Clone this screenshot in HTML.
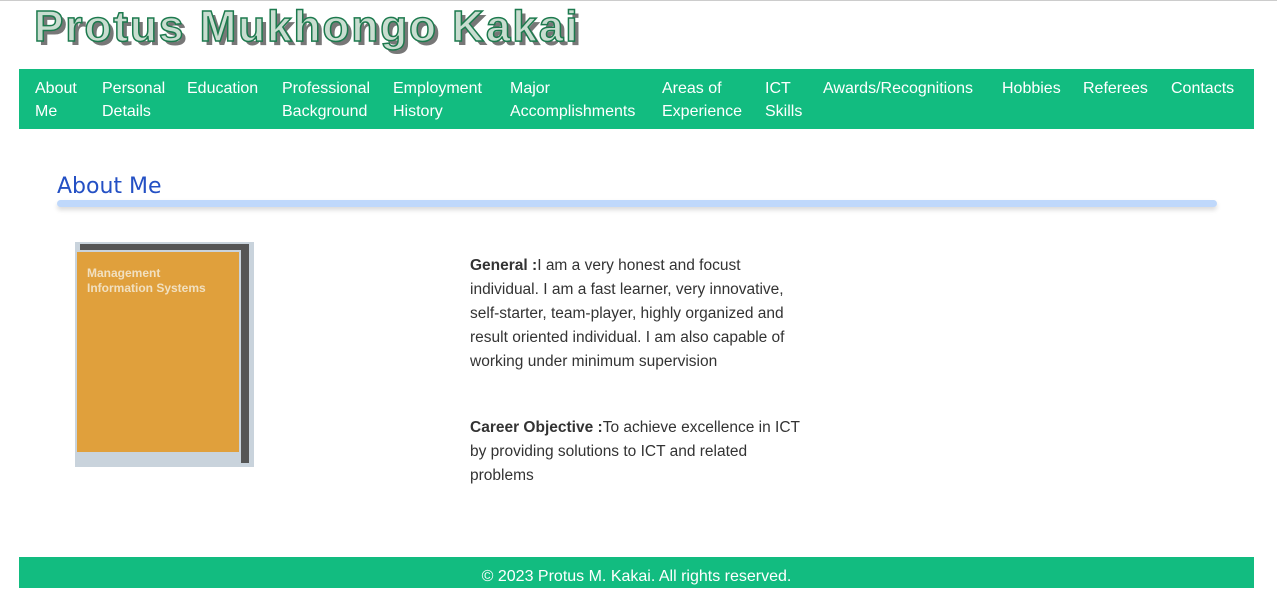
<!DOCTYPE html>
<html><head><style>
body{margin:0;width:1277px;height:588px;background:#fff;font-family:"Liberation Sans",sans-serif;position:relative;overflow:hidden;border-top:1px solid #ccc;box-sizing:border-box}
.title{position:absolute;left:34px;top:1px;font:900 44px "Liberation Sans",sans-serif;letter-spacing:2px;color:#c9ddd0;-webkit-text-stroke:1.5px #1d7a4e;text-shadow:4px 4px 0 #777;white-space:nowrap}
nav{position:absolute;left:19px;top:68px;width:1235px;height:60px;background:#12bc80}
nav span{position:absolute;top:8px;color:#fff;font-size:16px;line-height:23px}
h2{position:absolute;left:57px;top:173px;margin:0;font:400 22px "DejaVu Sans",sans-serif;color:#2450c4}
.bar{position:absolute;left:57px;top:199px;width:1160px;height:7px;background:#bfd8fb;border-radius:4px;box-shadow:0 3px 5px rgba(0,0,0,.15)}
.img{position:absolute;left:75px;top:241px;width:179px;height:225px;background:#c9d3dc}
.txt{position:absolute;left:470px;width:340px;font-size:15.5px;line-height:24px;color:#333}
footer{position:absolute;left:19px;top:556px;width:1235px;height:31px;background:#12bc80;color:#fff;text-align:center;font-size:16px;line-height:40px}
</style></head><body>
<div class="title">Protus Mukhongo Kakai</div>
<nav>
<span style="left:16px">About<br>Me</span>
<span style="left:83px">Personal<br>Details</span>
<span style="left:168px">Education</span>
<span style="left:263px">Professional<br>Background</span>
<span style="left:374px">Employment<br>History</span>
<span style="left:491px">Major<br>Accomplishments</span>
<span style="left:643px">Areas of<br>Experience</span>
<span style="left:746px">ICT<br>Skills</span>
<span style="left:804px">Awards/Recognitions</span>
<span style="left:983px">Hobbies</span>
<span style="left:1064px">Referees</span>
<span style="left:1152px">Contacts</span>
</nav>
<h2>About Me</h2>
<div class="bar"></div>
<div class="img">
<div style="position:absolute;left:5px;top:2px;width:168px;height:6px;background:#555"></div>
<div style="position:absolute;left:166px;top:2px;width:8px;height:219px;background:#555"></div>
<div style="position:absolute;left:2px;top:10px;width:162px;height:200px;background:#e0a03c"></div>
<div style="position:absolute;left:12px;top:24px;color:#f1e0c0;font:bold 12px 'Liberation Sans';line-height:15px">Management<br>Information Systems</div>
</div>
<div class="txt" style="top:253px"><b>General :</b>I am a very honest and focust individual. I am a fast learner, very innovative, self-starter, team-player, highly organized and result oriented individual. I am also capable of working under minimum supervision</div>
<div class="txt" style="top:415px"><b>Career Objective :</b>To achieve excellence in ICT by providing solutions to ICT and related problems</div>
<footer>© 2023 Protus M. Kakai. All rights reserved.</footer>
</body></html>
